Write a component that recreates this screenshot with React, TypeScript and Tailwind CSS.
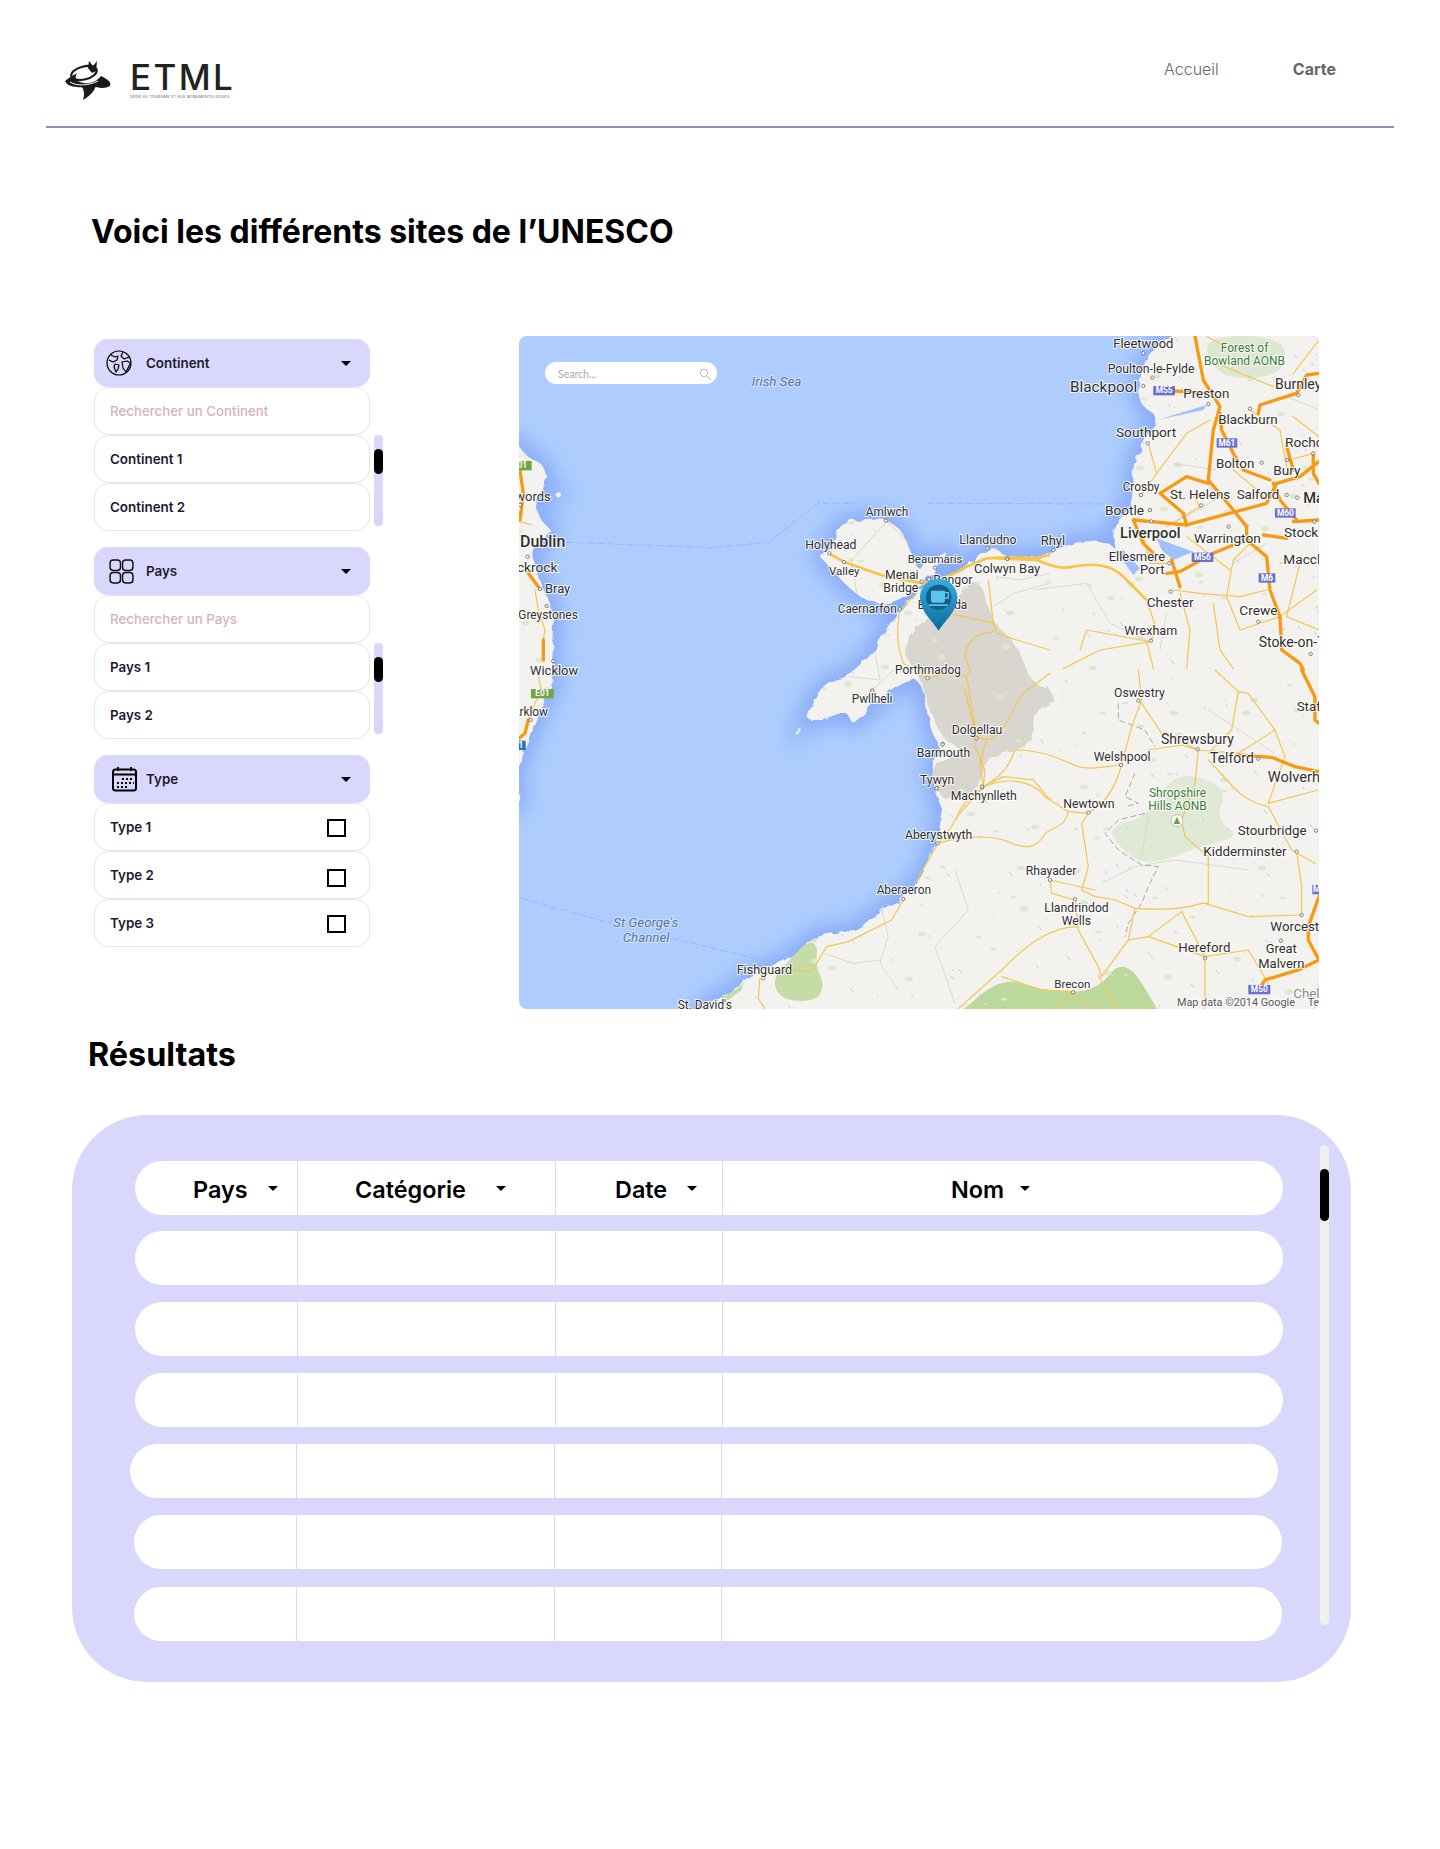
import React from "react";

const Z4 = "translate(515 330) scale(0.3333)";
const Z5 = "translate(1000 330) scale(0.3333)";
const Z8 = "translate(515 670) scale(0.3333)";
const Z9 = "translate(915 670) scale(0.3333)";
const Z10 = "translate(780 480) scale(0.3333)";

const COAST =
  "M1190 320 L1190 320 L1173 336 L1147 353 L1140 380 L1138 387 L1142 407 L1160 417 L1140 447 L1132 470 L1133 497 L1128 510 L1110 530 L1116 550 L1110 543 L1080 540 L1050 552 L1037 558 L1033 557 L1007 557 L993 547 L987 550 L960 570 L930 585 L922 587 L900 610 L887 627 L873 653 L850 677 L830 680 L817 693 L803 720 L823 720 L847 710 L852 725 L860 717 L877 703 L893 687 L913 677 L923 687 L927 713 L933 737 L943 747 L930 767 L935 790 L943 813 L935 847 L922 877 L902 900 L882 908 L858 930 L843 932 L820 935 L808 942 L788 960 L745 977 L742 987 L715 1000 L705 1009 L695 1030 L695 1030 L1345 1030 L1345 1030 L1345 320 L1345 320 Z " +
  "M818 555 L826 550 L832 552 L835 535 L842 523 L867 518 L890 520 L905 535 L912 555 L918 572 L940 552 L950 553 L935 570 L915 590 L895 602 L877 605 L857 595 L843 582 L830 567 Z " +
  "M505 440 L519 445 L528 458 L542 463 L547 477 L543 490 L535 503 L538 517 L548 527 L553 533 L540 540 L533 548 L532 557 L538 577 L545 593 L552 607 L555 630 L550 660 L555 680 L543 700 L535 723 L525 747 L519 770 L505 780 Z " +
  "M508 778 L523 797 L508 812 Z M555 493 L561 492 L561 497 L556 497 Z M798 727 L800 728 L798 736 L796 735 Z";

const MOUNTAINS =
  "M900 650 L920 620 L947 617 L960 593 L980 577 L993 623 L1010 637 L1020 653 L1032 683 L1052 690 L1055 700 L1042 708 L1033 713 L1033 740 L1015 752 L992 757 L982 767 L982 787 L952 797 L943 800 L932 780 L932 767 L965 750 L942 740 L925 697 L922 680 Z";

const smooth = (d: string) =>
  d
    .split("Z")
    .filter((s) => s.trim())
    .map((sub) => {
      const n = sub.match(/-?[\d.]+/g)!.map(Number);
      const pts: [number, number][] = [];
      for (let i = 0; i < n.length; i += 2) pts.push([n[i], n[i + 1]]);
      const mid = (a: [number, number], b: [number, number]) => `${(a[0] + b[0]) / 2} ${(a[1] + b[1]) / 2}`;
      let out = `M${mid(pts[pts.length - 1], pts[0])}`;
      pts.forEach((p, i) => {
        out += ` Q${p[0]} ${p[1]} ${mid(p, pts[(i + 1) % pts.length])}`;
      });
      return out + "Z";
    })
    .join(" ");

const MOTORWAYS: [string, string][] = [
  [Z5, "M585 18 L610 150 L660 230 L640 300 L625 450 L700 540 L740 590 L740 630 L800 680 L810 780 L840 860 L845 960 L900 1000 L910 1020"],
  [Z5, "M490 180 L620 190"],
  [Z5, "M660 250 L665 300 L700 370 L730 420 L810 450"],
  [Z5, "M775 250 L780 225 L890 190 L920 135 L957 130"],
  [Z5, "M480 490 L560 440 L625 460 M480 490 L550 550 L560 585 L800 520 L830 460 L900 440 L957 395"],
  [Z5, "M400 570 L430 640 L460 670 M400 570 L455 575 L560 585"],
  [Z5, "M500 730 L540 725 L640 670 L700 645 L745 630 M790 615 L860 625 M880 575 L957 570 M820 460 L840 510 L890 570"],
  [Z5, "M515 690 L540 770 M860 350 L880 420 M940 370 L940 430 L957 460"],
  [Z9, "M1160 0 L1200 80 L1200 150 L1212 160"],
  [Z9, "M970 255 L1070 262 L1140 290 L1212 305"],
  [Z9, "M1212 680 L1180 770 L1180 810 L1212 870 L1150 900 L1050 930 L1030 960"],
  [Z4, "M12 400 L25 490 L15 570 M40 730 L70 770"],
  [Z4, "M85 930 L85 990"],
  [Z8, "M40 150 L30 190 L12 205"],
];

const ROADS: [string, string][] = [
  [Z9, "M70 520 L0 640 M70 520 C130 500 230 490 290 520 C340 540 370 530 390 490 C420 470 450 470 460 425 L520 430 L560 400 C590 370 610 320 620 285"],
  [Z9, "M620 285 C560 290 530 300 490 290 C430 265 380 240 300 240 C280 290 270 310 205 350 C170 400 130 420 110 470 L70 520"],
  [Z9, "M205 350 L210 300 L180 230 L185 205 L150 60 M205 350 C280 320 350 330 390 380 L460 425"],
  [Z9, "M620 285 L650 170 L680 90 L670 0 M680 100 L740 190 L850 240 L800 225 L700 240"],
  [Z9, "M850 240 L840 340 L800 450 L810 500 L880 560 L880 700 L860 700 M880 270 C950 340 970 390 1060 410 L1130 540 L1200 580"],
  [Z9, "M1145 545 L1160 650 L1160 740 M860 700 C800 720 730 720 660 715 L600 690 L540 680 L500 660 L520 590 L500 460 L520 430"],
  [Z9, "M405 630 L410 670 L480 690 L490 780 L550 890 L560 920 L640 810 L660 715 M405 630 L540 660"],
  [Z9, "M490 770 C400 770 330 830 260 900 L130 1016 M640 810 L700 800 L800 725 L870 860 L870 1016 M700 800 L870 860 L1000 840 L1060 940"],
  [Z9, "M870 700 L1000 740 L1160 735 M850 240 L970 250 L1080 180 L1000 70 L970 65 L900 0 M970 65 L950 180 L880 250"],
  [Z9, "M1080 180 L1110 260 L1060 400 L1210 360 M260 920 L380 960 L470 965 L540 1016 M470 965 L420 1016 M550 915 L600 1016"],
  [Z10, "M360 390 C350 440 350 500 370 550 L440 595 L500 580 L555 590 M360 390 L410 340"],
  [Z10, "M510 400 L640 430 L650 460 L710 480 L810 510 M625 300 L640 430"],
  [Z10, "M640 455 C590 460 560 480 555 530 L570 570 L560 590 L575 680 L590 770 L620 780 L600 850 L610 920 L670 890 L760 900 L810 960"],
  [Z10, "M590 770 L620 780 C680 770 700 670 730 640 L810 580 M610 920 C560 960 530 990 530 1020"],
  [Z5, "M520 780 L600 790 L720 800 L800 780 M540 790 L570 900 L560 1016 M640 820 L660 960 L700 1016"],
  [Z5, "M440 810 L470 900 L450 935 L300 960 L190 1016 M450 935 L260 900 L240 960 M440 935 L460 1016"],
  [Z5, "M700 690 L680 800 L720 900 L780 880 M780 880 L840 860 L950 780 M840 700 L957 680"],
  [Z5, "M445 340 L470 430 L420 500 M470 430 L560 310 L630 270 M750 240 L840 300 L860 410 M860 330 L870 390 L940 370"],
  [Z5, "M600 530 L570 480 M600 530 L500 590 M430 620 L450 700 L510 700 M620 20 L700 60 M880 130 L957 30"],
  [Z5, "M700 420 L760 470 L800 510 M650 100 L820 170 M880 260 L957 320 M560 620 L690 720 M750 640 L700 690 M900 700 L860 860 L957 900"],
  [Z8, "M1165 690 L1130 750 L1060 785 L1000 815 L935 830 L905 880 L885 905 L830 900 M735 925 L730 985 L750 1016"],
  [Z4, "M60 780 L70 840 L90 900 L85 930 M15 575 L50 585"],
  [Z8, "M70 20 L80 60 L60 100 L40 150"],
];

const MINOR: [string, string][] = [
  [Z10, "M230 340 L215 240 L320 125 L390 190 M285 520 L300 600 L210 590 M275 632 L350 560"],
  [Z10, "M640 380 L700 340 L810 310 M650 290 L720 300 L810 280"],
  [Z5, "M100 780 L260 760 L330 880 L440 930 M500 850 L480 960 M560 560 L660 500 M700 700 L800 640 M520 400 L650 420 M860 200 L957 240"],
  [Z9, "M120 600 L160 720 L60 830 L120 1000 M560 640 L660 590 L780 570 L1000 600 M680 560 L700 440 M880 120 L1080 250"],
  [Z8, "M1100 715 L1120 800 L1095 880 L1150 960 M930 850 L1010 880 L1100 870"],
];

const LABELS: [string, string, number, number, number, number?][] = [
  [Z5, "Fleetwood", 340, 55, 36],
  [Z5, "Poulton-le-Fylde", 323, 130, 34],
  [Z5, "Blackpool", 210, 185, 46],
  [Z5, "Preston", 550, 205, 40],
  [Z5, "Burnley", 825, 178, 39],
  [Z5, "Blackburn", 655, 283, 40],
  [Z5, "Southport", 348, 322, 38],
  [Z5, "Rochdale", 855, 352, 38],
  [Z5, "Bolton", 648, 413, 40],
  [Z5, "Bury", 820, 435, 38],
  [Z5, "Crosby", 368, 482, 33],
  [Z5, "St. Helens", 510, 507, 40],
  [Z5, "Salford", 710, 507, 40],
  [Z5, "Manchester", 910, 518, 44, 500],
  [Z5, "Bootle", 315, 555, 38],
  [Z5, "Liverpool", 360, 625, 44, 500],
  [Z5, "Warrington", 582, 638, 38],
  [Z5, "Stockport", 852, 620, 38],
  [Z5, "Rhyl", 122, 645, 36],
  [Z5, "Macclesfield", 850, 702, 38],
  [Z5, "Ellesmere", 326, 692, 36],
  [Z5, "Port", 420, 733, 36],
  [Z5, "Chester", 440, 830, 38],
  [Z5, "Crewe", 718, 855, 38],
  [Z5, "Wrexham", 373, 915, 35],
  [Z5, "Stoke-on-Trent", 776, 950, 42],
  [Z9, "Oswestry", 597, 80, 34],
  [Z9, "Stafford", 1145, 123, 40],
  [Z9, "Shrewsbury", 738, 222, 42],
  [Z9, "Telford", 885, 280, 42],
  [Z9, "Wolverhampton", 1058, 335, 44],
  [Z9, "Welshpool", 536, 272, 34],
  [Z9, "Dolgellau", 110, 192, 34],
  [Z9, "Barmouth", 5, 260, 34],
  [Z9, "Tywyn", 15, 342, 34],
  [Z9, "Machynlleth", 107, 390, 34],
  [Z9, "Newtown", 445, 415, 34],
  [Z9, "Stourbridge", 968, 496, 40],
  [Z9, "Kidderminster", 865, 558, 40],
  [Z9, "Aberystwyth", -30, 508, 34],
  [Z9, "Rhayader", 332, 616, 34],
  [Z9, "Llandrindod", 388, 725, 34],
  [Z9, "Wells", 440, 765, 34],
  [Z9, "Worcester", 1066, 782, 40],
  [Z9, "Great", 1052, 850, 36],
  [Z9, "Malvern", 1030, 895, 36],
  [Z9, "Hereford", 790, 847, 40],
  [Z9, "Brecon", 418, 953, 32],
  [Z8, "Aberaeron", 1085, 672, 33],
  [Z8, "Fishguard", 665, 912, 35],
  [Z8, "St. David's", 488, 1017, 33],
  [Z8, "Arklow", -10, 138, 33],
  [Z8, "Wicklow", 45, 15, 36],
  [Z10, "Amlwch", 257, 108, 33],
  [Z10, "Holyhead", 76, 207, 34],
  [Z10, "Llandudno", 538, 192, 34],
  [Z10, "Beaumaris", 383, 250, 32],
  [Z10, "Valley", 147, 285, 32],
  [Z10, "Menai", 315, 298, 34],
  [Z10, "Bridge", 310, 337, 34],
  [Z10, "Bangor", 460, 313, 34],
  [Z10, "Colwyn Bay", 582, 278, 36],
  [Z10, "Caernarfon", 173, 400, 33],
  [Z10, "Bethesda", 413, 388, 33],
  [Z10, "Porthmadog", 345, 581, 33],
  [Z10, "Pwllheli", 215, 670, 33],
  [Z4, "Swords", -22, 512, 36],
  [Z4, "Dublin", 15, 650, 48, 500],
  [Z4, "Blackrock", -52, 725, 38],
  [Z4, "Bray", 90, 790, 36],
  [Z4, "Greystones", 10, 867, 33],
];

const SHIELDS: [string, number, number, number, string, string][] = [
  [Z5, 460, 168, 65, "M55", "#6a6fd0"],
  [Z5, 650, 325, 62, "M61", "#6a6fd0"],
  [Z5, 825, 535, 62, "M60", "#6a6fd0"],
  [Z5, 575, 668, 65, "M56", "#6a6fd0"],
  [Z5, 776, 730, 50, "M6", "#6a6fd0"],
  [Z9, 1000, 945, 66, "M50", "#6a6fd0"],
  [Z9, 1192, 645, 40, "M5", "#6a6fd0"],
  [Z8, 48, 57, 68, "E01", "#6ea83e"],
  [Z4, -20, 393, 70, "E01", "#6ea83e"],
  [Z8, -28, 212, 60, "N11", "#2f6fc6"],
];

const TOWNS: [string, number[]][] = [
  [Z5, [430, 70, 457, 143, 430, 168, 625, 222, 750, 236, 443, 340, 785, 398, 862, 390, 940, 370, 423, 495, 604, 526, 860, 495, 892, 503, 450, 540, 454, 574, 686, 590, 943, 575, 160, 660, 22, 686, 508, 700, 512, 785, 775, 875, 453, 932, 932, 972, 895, 195]],
  [Z9, [670, 92, 848, 238, 618, 285, 83, 222, 184, 205, 65, 355, 202, 352, 520, 428, 68, 520, 405, 630, 480, 688, 1145, 545, 1203, 482, 1160, 735, 1098, 812, 870, 865, 474, 967, 1030, 266]],
  [Z10, [318, 122, 148, 220, 192, 246, 465, 263, 425, 305, 447, 298, 622, 205, 682, 237, 360, 388, 443, 595, 277, 632, 488, 793, 470, 925, 606, 920]],
  [Z4, [38, 680, 75, 777, 95, 828, 115, 993, 15, 525]],
  [Z8, [47, 150, 745, 925, 1165, 687, 1072, 62]],
];

// petites taches et rivieres pour donner du grain a la carte
const SPECKS: { x: number; y: number; r: number; green: boolean }[] = [];
let seed = 7;
for (let i = 0; i < 700; i++) {
  seed = (seed * 16807) % 2147483647;
  const x = 519 + (seed % 800);
  seed = (seed * 16807) % 2147483647;
  const y = 336 + (seed % 673);
  seed = (seed * 16807) % 2147483647;
  SPECKS.push({ x, y, r: 1 + (seed % 3), green: seed % 2 === 0 });
}

function Caret({ className }: { className: string }) {
  return (
    <svg className={className} viewBox="0 0 10 5" width="10" height="5">
      <path d="M0 0H10L5 5Z" fill="#000" />
    </svg>
  );
}

function MapView() {
  return (
    <svg viewBox="519 336 800 673" width="800" height="673" fontFamily="Roboto, sans-serif" className="block">
      <defs>
        <filter id="shore" x="-10%" y="-10%" width="120%" height="120%">
          <feGaussianBlur stdDeviation="10" />
        </filter>
        <filter id="rough" x="-5%" y="-5%" width="110%" height="110%">
          <feTurbulence type="fractalNoise" baseFrequency="0.09" numOctaves="2" seed="4" />
          <feDisplacementMap in="SourceGraphic" scale="7" />
        </filter>
        <clipPath id="land">
          <path d={smooth(COAST)} />
        </clipPath>
        <linearGradient id="pin" x1="0" y1="0" x2="0" y2="1">
          <stop offset="0" stopColor="#35aee0" />
          <stop offset="1" stopColor="#0c6c9c" />
        </linearGradient>
      </defs>

      <rect x="519" y="336" width="800" height="673" fill="#aecdfe" />
      <path d={smooth(COAST)} fill="#88acf7" stroke="#88acf7" strokeWidth="18" filter="url(#shore)" />
      <path d={smooth(COAST)} fill="#f3f2ee" filter="url(#rough)" />

      <g clipPath="url(#land)">
        <path d={smooth(MOUNTAINS)} fill="#d9d5cf" filter="url(#rough)" />
        <g transform={Z5}>
          <path d={smooth("M600 18 L850 18 L860 120 L760 150 L650 135 Z")} fill="#dde8d2" />
        </g>
        <g transform={Z9}>
          <path d={smooth("M575 470 L700 440 L780 300 L940 350 L900 450 L980 500 L850 530 L700 590 L620 540 Z")} fill="#e0e8d6" />
          <path d={smooth("M120 1040 L120 1040 L260 920 L370 960 L540 970 L630 855 L740 1040 L740 1040 Z")} fill="#bcd99c" />
        </g>
        <g transform={Z8}>
          <path d={smooth("M880 810 L910 830 L900 880 L930 950 L900 995 L800 990 L770 930 L820 875 Z")} fill="#c5dca6" />
          <path d="M610 980 L690 925 L680 960 L640 990 Z" fill="#c5dca6" />
        </g>
        {SPECKS.map((s, i) =>
          s.green ? (
            <ellipse key={i} cx={s.x} cy={s.y} rx={s.r + 1} ry={s.r * 0.8} fill="#dde8d0" />
          ) : (
            <path key={i} d={`M${s.x} ${s.y}l${s.r} ${s.r + 1}`} stroke="#b9d2f5" strokeWidth="1" />
          )
        )}
      </g>

      <g transform={Z5} fill="#9fc0fa">
        <path d="M470 625 L580 665 L520 690 L485 660 Z" />
        <path d="M345 660 L400 735 L420 715 L370 660 Z" />
        <path d="M440 280 L620 225 L610 240 L470 270 Z" />
      </g>

      <g fill="none" stroke="#8db4f9" strokeWidth="2.4" strokeDasharray="21 9">
        <path transform={Z4} d="M155 637 L590 653 L760 637 L910 520 L1020 520" />
        <path transform={Z5} d="M-220 520 L310 522" />
        <path transform={Z8} d="M20 685 L290 760 M470 805 L740 870" />
      </g>

      <g fill="none" stroke="#d5d2c9" strokeWidth="2.4" strokeLinejoin="round">
        {MINOR.map(([t, d], i) => (
          <path key={i} transform={t} d={d} />
        ))}
      </g>
      <g transform={Z9} fill="none" stroke="#a9a9a6" strokeWidth="3" strokeDasharray="18 9">
        <path d="M610 100 L610 150 L690 180 L720 230 M660 310 L630 380 L670 400 L630 410 M690 430 L610 450 L570 490 L610 540 L680 585 L730 590 L700 650 L680 700 L640 760 L630 800" />
      </g>
      <g fill="none" stroke="#f5c552" strokeWidth="3.6" strokeLinejoin="round" strokeLinecap="round">
        {ROADS.map(([t, d], i) => (
          <path key={i} transform={t} d={d} />
        ))}
      </g>
      <g fill="none" stroke="#f6c544" strokeWidth="8" strokeLinejoin="round">
        <path transform={Z10} d="M150 222 L190 245 L310 287 L400 305 L430 310 C480 300 530 280 560 260 L620 235 L680 232 L760 235 L810 225" />
        <path transform={Z5} d="M-10 685 L110 690 C150 705 180 720 220 710 C270 700 330 700 370 740 L440 810" />
      </g>
      <g fill="none" stroke="#f59a12" strokeWidth="10" strokeLinejoin="round" strokeLinecap="round">
        {MOTORWAYS.map(([t, d], i) => (
          <path key={i} transform={t} d={d} />
        ))}
      </g>

      {TOWNS.map(([t, pts], i) => (
        <g key={i} transform={t} fill="#fff" stroke="#666" strokeWidth="2.5">
          {pts.map((v, k) => (k % 2 === 0 ? <circle key={k} cx={v} cy={pts[k + 1]} r="5" /> : null))}
        </g>
      ))}

      {SHIELDS.map(([t, x, y, w, name, color]) => (
        <g key={name + x} transform={t}>
          <rect x={x} y={y} width={w} height={28} fill={color} />
          <text x={x + w / 2} y={y + 22} textAnchor="middle" fontSize="25" fontWeight="700" fill="#fff">
            {name}
          </text>
        </g>
      ))}

      <g fill="#2f2f2f" stroke="#ffffff" strokeOpacity="0.85" strokeWidth="6" style={{ paintOrder: "stroke" }}>
        {LABELS.map(([t, name, x, y, size, weight]) => (
          <text key={name} transform={t} x={x} y={y} fontSize={size < 40 ? size * 1.08 : size} fontWeight={weight ?? 400}>
            {name}
          </text>
        ))}
        <g fill="#3f7a3a" fontSize="36">
          <text transform={Z5} x="662" y="65">Forest of</text>
          <text transform={Z5} x="612" y="105">Bowland AONB</text>
          <text transform={Z9} x="702" y="382">Shropshire</text>
          <text transform={Z9} x="700" y="420">Hills AONB</text>
        </g>
        <g fill="#5d7799" fontSize="40" fontStyle="italic" strokeOpacity="0.4">
          <text transform={Z4} x="710" y="167">Irish Sea</text>
          <text transform={Z8} x="295" y="772">St George's</text>
          <text transform={Z8} x="323" y="815">Channel</text>
        </g>
        <text transform={Z9} x="1135" y="985" fontSize="40" fill="#8a8a8a">Chel</text>
        <text transform={Z9} x="786" y="1007" fontSize="32.5" fill="#555">Map data ©2014 Google</text>
        <text transform={Z9} x="1178" y="1007" fontSize="32.5" fill="#555">Terms</text>
      </g>

      <g transform={Z9}>
        <circle cx="786" cy="452" r="18" fill="#fff" stroke="#bbb" strokeWidth="3" />
        <path d="M786 440 L796 462 L776 462 Z" fill="#6aa62e" />
      </g>

      <g transform={Z10}>
        <path d="M476 452 C460 425 420 395 420 352 A56 56 0 0 1 532 352 C532 395 492 425 476 452 Z" fill="url(#pin)" />
        <circle cx="476" cy="352" r="38" fill="#135f88" />
        <path d="M453 332 H495 V360 A8 8 0 0 1 487 368 H461 A8 8 0 0 1 453 360 Z" fill="#5fc3ec" />
        <path d="M495 338 H505 V354 H495" fill="none" stroke="#5fc3ec" strokeWidth="4" />
        <rect x="446" y="373" width="58" height="5" rx="2" fill="#5fc3ec" />
      </g>

      <rect x="545" y="362" width="172" height="22" rx="11" fill="#fff" />
      <text x="558" y="378" fontSize="10.5" fontFamily="Lato, sans-serif" fill="#a9a9a9">Search...</text>
      <circle cx="704" cy="373" r="3.6" fill="none" stroke="#b5b5b5" />
      <path d="M707 376 L711 380" stroke="#b5b5b5" />
    </svg>
  );
}

function Logo() {
  return (
    <div className="flex items-start">
      <svg width="48" height="40" viewBox="0 0 48 40" fill="none" stroke="#1a1a1a">
        <path d="M24 7 L25 0 L29 5 L33 0 L32 10 L28 12 Z" fill="#1a1a1a" stroke="none" />
        <ellipse cx="20" cy="12" rx="13" ry="6.5" transform="rotate(-14 20 12)" strokeWidth="2.2" />
        <path d="M1 20 C6 16 10 14 13 12 C10 18 12 21 20 22 C27 23 33 20 37 15 C44 18 48 22 46 25 C41 28 34 27 28 25 C20 27 8 27 3 23 Z" fill="#1a1a1a" stroke="none" />
        <path d="M6 21 C12 25 24 25 34 20" stroke="#fff" strokeWidth="1" />
        <path d="M17 25 L32 24 C31 30 26 35 19 39 C21 33 20 28 17 25 Z" fill="#1a1a1a" stroke="none" />
      </svg>
      <div className="ml-[18px] mt-[1px] w-[100px]">
        <div className="text-[35px] leading-[30px] font-medium tracking-[2.4px] text-[#222]">ETML</div>
        <div className="mt-[3px] text-[3.6px] leading-[5px] tracking-[0.22px] whitespace-nowrap text-[#555]">
          DÉDIÉ AU TOURISME ET AUX MONUMENTS LÉGUÉS
        </div>
      </div>
    </div>
  );
}

function GroupHeader({ icon, label }: { icon: React.ReactNode; label: string }) {
  return (
    <div className="h-12 flex items-center rounded-[14px] bg-[#dad7fd]">
      <div className="w-[52px] flex justify-center">{icon}</div>
      <span className="text-[13.4px] font-semibold text-[#1c1b2e]">{label}</span>
      <Caret className="ml-auto mr-[19px]" />
    </div>
  );
}

function Item({ children }: { children: React.ReactNode }) {
  return (
    <div className="h-12 flex items-center px-[15px] rounded-[14px] border border-[#e6e6ea] bg-white text-[13.4px] font-semibold text-[#1c1b2e]">
      {children}
    </div>
  );
}

function Scroll() {
  return (
    <div className="ml-1 w-[9px] h-[91px] pt-[14px] rounded-[4px] bg-[#dad7fd]">
      <div className="h-[25px] rounded-[5px] bg-black" />
    </div>
  );
}

function SearchGroup({ icon, label, search, items }: { icon: React.ReactNode; label: string; search: string; items: string[] }) {
  return (
    <div className="mb-4">
      <div className="w-[276px]">
        <GroupHeader icon={icon} label={label} />
        <div className="h-12 flex items-center pl-[15px] pt-[2px] rounded-[14px] border border-[#e6e6ea] bg-white text-[13.3px] font-medium text-[#d9b3b5]">
          {search}
        </div>
      </div>
      <div className="flex">
        <div className="w-[276px]">
          {items.map((it) => (
            <Item key={it}>{it}</Item>
          ))}
        </div>
        <Scroll />
      </div>
    </div>
  );
}

function TableRow({ first, className, children }: { first: string; className: string; children?: React.ReactNode[] }) {
  return (
    <div className={`h-[54px] flex rounded-full bg-white overflow-hidden ${className}`}>
      <div className={`${first} border-r border-[#dad7fd] flex items-center`}>{children?.[0]}</div>
      <div className="w-[258px] border-r border-[#dad7fd] flex items-center">{children?.[1]}</div>
      <div className="w-[167px] border-r border-[#dad7fd] flex items-center">{children?.[2]}</div>
      <div className="flex-1 flex items-center">{children?.[3]}</div>
    </div>
  );
}

function ColTitle({ label, className, gap }: { label: string; className: string; gap: string }) {
  return (
    <div className={`flex items-center ${className}`}>
      <span className="text-[23.4px] leading-8 pt-[3px] font-semibold text-black">{label}</span>
      <Caret className={gap} />
    </div>
  );
}

export default function App() {
  return (
    <div className="relative w-[1440px] h-[1849px] bg-white font-['Inter',sans-serif] overflow-hidden">
      <header className="mx-[46px] h-[128px] border-b-2 border-[#8f8bc4] flex justify-between">
        <div className="pl-[18px] pt-[61px]">
          <Logo />
        </div>
        <nav className="flex pt-[57px] pr-[58px] text-base text-[#666]">
          <a className="font-light">Accueil</a>
          <a className="ml-[74px] font-bold">Carte</a>
        </nav>
      </header>

      <h1 className="mt-[84px] ml-[91px] text-[32px] leading-10 font-bold text-black">
        Voici les différents sites de l’UNESCO
      </h1>

      <div className="mt-[84px] flex items-start">
        <aside className="ml-[94px] mt-[3px] w-[289px]">
          <SearchGroup
            icon={
              <svg width="26" height="26" viewBox="0 0 26 26" fill="none" stroke="#000" strokeWidth="1.2" strokeLinejoin="round" className="-ml-[2px]">
                <circle cx="13" cy="13" r="12" />
                <path d="M5 5 L9 7 L12 6 L11 10 L7 12 L3 10" />
                <path d="M17 2 L15 6 L18 9 L23 7" />
                <path d="M9 14 L13 15 L12 19 L10 22 L8 17 Z" />
                <path d="M16 12 L21 11 L24.5 13 L20 22 L17 18 Z" />
              </svg>
            }
            label="Continent"
            search="Rechercher un Continent"
            items={["Continent 1", "Continent 2"]}
          />
          <SearchGroup
            icon={
              <svg width="27" height="25" viewBox="0 0 26 24" fill="none" stroke="#111" strokeWidth="1.4" className="ml-[2px]">
                <rect x="2" y="1" width="10" height="10" rx="3" />
                <rect x="14" y="1" width="10" height="10" rx="3" />
                <rect x="2" y="13" width="10" height="10" rx="3" />
                <rect x="14" y="13" width="10" height="10" rx="3" />
              </svg>
            }
            label="Pays"
            search="Rechercher un Pays"
            items={["Pays 1", "Pays 2"]}
          />
          <div className="w-[276px]">
            <GroupHeader
              icon={
                <svg width="26" height="26" viewBox="0 0 26 26" className="ml-[8px]">
                  <rect x="2" y="3.5" width="23" height="21" rx="2.5" fill="none" stroke="#000" strokeWidth="2" />
                  <path d="M2 8.5H25M7 1V5M20 1V5" stroke="#000" strokeWidth="1.8" />
                  <path d="M11 12h2v2h-2zM15 12h2v2h-2zM19 12h2v2h-2zM6 16h2v2H6zM10 16h2v2h-2zM14 16h2v2h-2zM18 16h2v2h-2zM22 16h1v2h-1zM6 20h2v2H6zM10 20h2v2h-2zM14 20h2v2h-2z" fill="#000" />
                </svg>
              }
              label="Type"
            />
            {["Type 1", "Type 2", "Type 3"].map((t, i) => (
              <Item key={t}>
                <span>{t}</span>
                <span className={`ml-auto mr-[8px] w-[19px] h-[18px] border-2 border-black ${i === 1 ? "mt-[6px]" : "mt-[2px]"}`} />
              </Item>
            ))}
          </div>
        </aside>

        <div className="ml-[136px] w-[800px] h-[673px] rounded-lg overflow-hidden">
          <MapView />
        </div>
      </div>

      <h2 className="mt-[26px] ml-[88px] text-[32.3px] leading-10 font-bold text-black">Résultats</h2>

      <section className="mt-[40px] ml-[72px] w-[1279px] h-[567px] rounded-[75px] bg-[#dad7fd] pt-[46px] pl-[63px] flex items-start">
        <div className="w-[1149px]">
          <TableRow first="w-[163px]" className="w-[1148px]">
            {[
              <ColTitle key="p" label="Pays" className="pl-[58px]" gap="ml-[20px]" />,
              <ColTitle key="c" label="Catégorie" className="pl-[57px]" gap="ml-[30px]" />,
              <ColTitle key="d" label="Date" className="pl-[59px]" gap="ml-[20px]" />,
              <ColTitle key="n" label="Nom" className="pl-[228px]" gap="ml-[16px]" />,
            ]}
          </TableRow>
          <TableRow first="w-[163px]" className="w-[1148px] mt-4" />
          <TableRow first="w-[163px]" className="w-[1148px] mt-[17px]" />
          <TableRow first="w-[163px]" className="w-[1148px] mt-[17px]" />
          <TableRow first="w-[167px]" className="w-[1148px] -ml-[5px] mt-[17px]" />
          <TableRow first="w-[163px]" className="w-[1148px] -ml-[1px] mt-[17px]" />
          <TableRow first="w-[163px]" className="w-[1148px] -ml-[1px] mt-[18px]" />
        </div>
        <div className="ml-[36px] -mt-4 w-[9px] h-[480px] pt-6 rounded-[5px] bg-[#eef0ec]">
          <div className="h-[52px] rounded-[5px] bg-black" />
        </div>
      </section>
    </div>
  );
}
